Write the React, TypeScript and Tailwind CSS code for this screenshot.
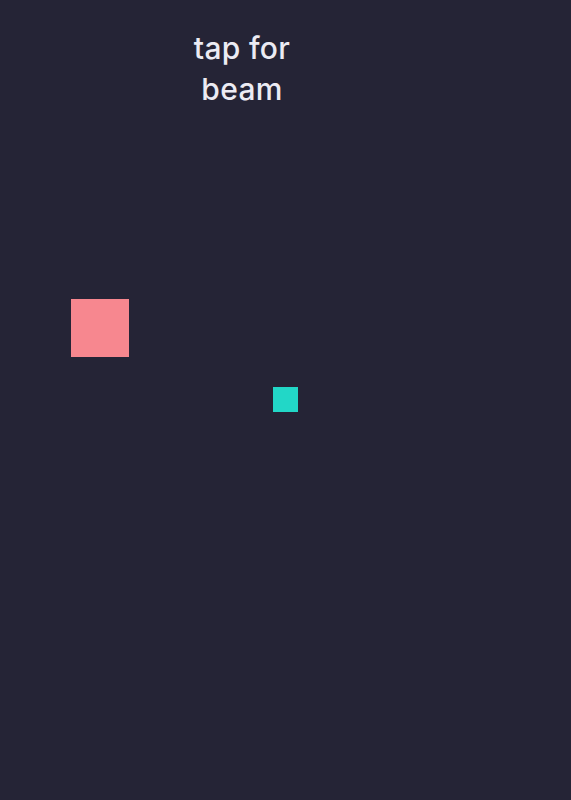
export default function App() {
  return (
    <div className="relative w-[571px] h-[800px] bg-[#252436] overflow-hidden" style={{ fontFamily: 'Inter, "Noto Sans", sans-serif' }}>
      <div className="w-[484px] pt-[28px] flex justify-center">
        <p className="w-[130px] text-center text-[30px] leading-[41px] font-medium tracking-[0.01em] text-[#ecebf3]">tap for beam</p>
      </div>
      <div className="absolute left-[71px] top-[299px] w-[58px] h-[58px] bg-[#f7878f]" />
      <div className="absolute left-[273px] top-[387px] w-[25px] h-[25px] bg-[#22d7c7]" />
    </div>
  );
}
